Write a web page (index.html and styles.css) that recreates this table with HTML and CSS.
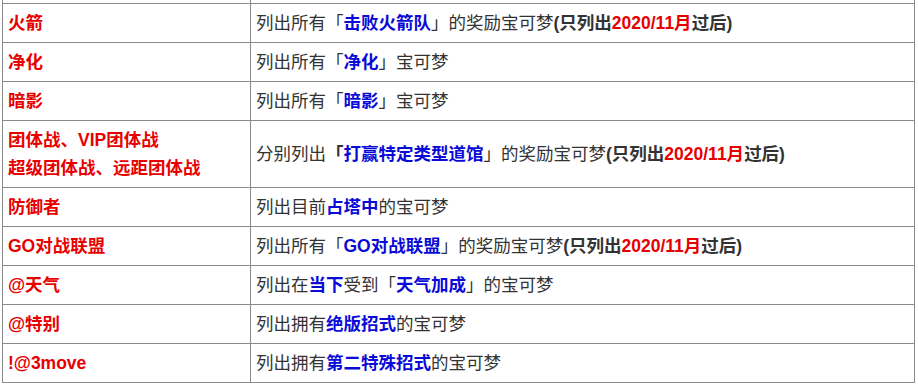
FILE: index.html
```html
<!DOCTYPE html>
<html lang="zh-CN">
<head>
<meta charset="utf-8">
<link rel="stylesheet" href="styles.css">
</head>
<body>
<table class="filters">
  <colgroup><col class="c-key"><col class="c-desc"></colgroup>
  <tr><td class="key">&nbsp;</td><td>&nbsp;</td></tr>
  <tr><td class="key">火箭</td><td>列出所有「<b class="blue">击败火箭队</b>」的奖励宝可梦<b>(只列出<span class="red">2020/11月</span>过后)</b></td></tr>
  <tr><td class="key">净化</td><td>列出所有「<b class="blue">净化</b>」宝可梦</td></tr>
  <tr><td class="key">暗影</td><td>列出所有「<b class="blue">暗影</b>」宝可梦</td></tr>
  <tr><td class="key">团体战、VIP团体战<br>超级团体战、远距团体战</td><td>分别列出<b>「</b><b class="blue">打赢特定类型道馆</b>」的奖励宝可梦<b>(只列出<span class="red">2020/11月</span>过后)</b></td></tr>
  <tr><td class="key">防御者</td><td>列出目前<b class="blue">占塔中</b>的宝可梦</td></tr>
  <tr><td class="key">GO对战联盟</td><td>列出所有「<b class="blue">GO对战联盟</b>」的奖励宝可梦<b>(只列出<span class="red">2020/11月</span>过后)</b></td></tr>
  <tr><td class="key">@天气</td><td>列出在<b class="blue">当下</b>受到「<b class="blue">天气加成</b>」的宝可梦</td></tr>
  <tr><td class="key">@特别</td><td>列出拥有<b class="blue">绝版招式</b>的宝可梦</td></tr>
  <tr><td class="key">!@3move</td><td>列出拥有<b class="blue">第二特殊招式</b>的宝可梦</td></tr>
</table>
</body>
</html>
```
FILE: styles.css
```css
html, body {
  margin: 0;
  padding: 0;
  background: #ffffff;
}
body {
  font-family: "Liberation Sans", "Noto Sans CJK SC", sans-serif;
  font-size: 17.5px;
  color: #333333;
}
.filters {
  border-collapse: collapse;
  width: 913px;
  margin: -36px 0 0 2px;
  table-layout: fixed;
}
.c-key { width: 248px; }
.filters td {
  border: 1px solid #8a8a8a;
  padding: 5px 5px;
  line-height: 28px;
  vertical-align: middle;
  white-space: nowrap;
}
.filters td.key {
  color: #e80000;
  font-weight: bold;
}
.filters b { font-weight: bold; }
.blue { color: #0a0ad8; }
.red { color: #e80000; }
```
